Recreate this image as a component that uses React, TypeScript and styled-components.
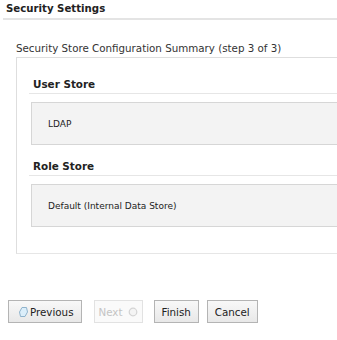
import React from 'react';
import styled, { createGlobalStyle } from 'styled-components';

const GlobalStyle = createGlobalStyle`
  html, body {
    margin: 0;
    padding: 0;
    background: #ffffff;
    overflow: hidden;
  }
  body {
    font-family: "DejaVu Sans", Verdana, sans-serif;
    color: #222;
  }
`;

const Page = styled.div`
  width: 380px;
  height: 340px;
  display: flex;
  flex-direction: column;
`;

const PageTitle = styled.h1`
  margin: 0 0 0 3px;
  padding: 3px 0 3px 3px;
  font-size: 10.2px;
  line-height: 12px;
  font-weight: bold;
  color: #222;
  border-bottom: 2px solid #e4e4e4;
`;

const Summary = styled.div`
  margin: 22px 0 0 16px;
`;

const SummaryTitle = styled.div`
  font-size: 10.3px;
  color: #333;
  padding-bottom: 3px;
`;

const SummaryBody = styled.div`
  border-top: 1px solid #dedede;
  border-left: 1px solid #dedede;
  border-bottom: 1px solid #e6e6e6;
  height: 197px;
  padding: 20px 0 0 12px;
  box-sizing: border-box;
  display: flex;
  flex-direction: column;
  gap: 15px;
`;

const Section = styled.div`
  display: flex;
  flex-direction: column;
`;

const SectionTitle = styled.div`
  font-size: 10.4px;
  line-height: 13px;
  font-weight: bold;
  color: #222;
  padding: 0 0 2px 4px;
  border-bottom: 1px solid #e6e6e6;
`;

const ValueBox = styled.div`
  margin: 8px 0 0 2px;
  height: 43px;
  box-sizing: border-box;
  background: #f3f3f3;
  border: 1px solid #d6d6d6;
  display: flex;
  align-items: center;
  padding-left: 16px;
  font-size: 9px;
  color: #222;
`;

const ButtonBar = styled.div`
  display: flex;
  align-items: center;
  margin: 46px 0 0 8px;
`;

const Button = styled.button<{ $disabled?: boolean; $gap?: number }>`
  font-family: "DejaVu Sans", Verdana, sans-serif;
  font-size: 10.3px;
  height: 23px;
  padding: 0 7px;
  margin: 0 ${p => p.$gap ?? 8}px 0 0;
  display: flex;
  align-items: center;
  gap: 2px;
  background: ${p => (p.$disabled ? '#fafafa' : 'linear-gradient(#f8f8f8, #e8e8e8)')};
  border: 1px solid ${p => (p.$disabled ? '#e2e2e2' : '#b4b4b4')};
  color: ${p => (p.$disabled ? '#c4c4c4' : '#222')};
  border-radius: 0;
  cursor: ${p => (p.$disabled ? 'default' : 'pointer')};
`;

const PrevButton = styled(Button)`
  padding: 0 7px 0 10px;
`;

const NextButton = styled(Button)`
  padding: 0 4px;
  gap: 5px;
`;

const PrevIcon = () => (
  <svg width="9" height="10" viewBox="0 0 9 10">
    <polygon points="3,0.5 7.5,0.5 8.5,5 6,9.5 1.5,9.5 0.5,5" fill="#dbeefa" stroke="#8fb3cc" strokeWidth="1" />
  </svg>
);

const NextIcon = () => (
  <svg width="10" height="10" viewBox="0 0 10 10">
    <circle cx="5" cy="5" r="3.8" fill="#f4f4f4" stroke="#d4d4d4" strokeWidth="1.2" />
  </svg>
);

export default function App() {
  return (
    <Page>
      <GlobalStyle />
      <PageTitle>Security Settings</PageTitle>
      <Summary>
        <SummaryTitle>Security Store Configuration Summary (step 3 of 3)</SummaryTitle>
        <SummaryBody>
          <Section>
            <SectionTitle>User Store</SectionTitle>
            <ValueBox>LDAP</ValueBox>
          </Section>
          <Section>
            <SectionTitle>Role Store</SectionTitle>
            <ValueBox>Default (Internal Data Store)</ValueBox>
          </Section>
        </SummaryBody>
      </Summary>
      <ButtonBar>
        <PrevButton $gap={12}>
          <PrevIcon />
          Previous
        </PrevButton>
        <NextButton $disabled $gap={11}>
          Next
          <NextIcon />
        </NextButton>
        <Button>Finish</Button>
        <Button>Cancel</Button>
      </ButtonBar>
    </Page>
  );
}
